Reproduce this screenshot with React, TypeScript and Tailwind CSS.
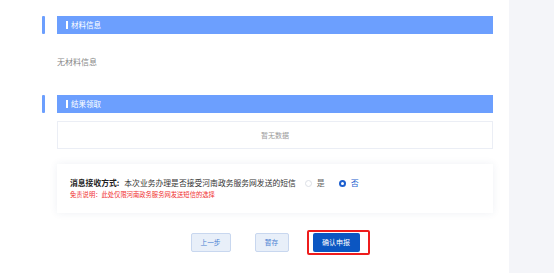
import React from 'react';

const font = { fontFamily: '"Noto Sans CJK SC", "Noto Sans", sans-serif' };

const SectionHeader = ({ title }: { title: string }) => (
  <div className="flex items-stretch pl-[42px] pr-[16px] h-[18px]">
    <div className="w-[3px] bg-[#6c9ffe] rounded-[1px]" />
    <div className="ml-[12px] flex-1 bg-[#6c9ffe] flex items-center pl-[9px]">
      <span className="w-[2px] h-[8px] bg-white" />
      <span className="ml-[3px] text-[7.5px] leading-none text-white">{title}</span>
    </div>
  </div>
);

const Radio = ({ checked, label }: { checked: boolean; label: string }) => (
  <label className="flex items-center">
    {checked ? (
      <span className="w-[7px] h-[7px] rounded-full bg-[#1c5fcf] flex items-center justify-center">
        <span className="w-[3px] h-[3px] rounded-full bg-white" />
      </span>
    ) : (
      <span className="w-[7px] h-[7px] rounded-full border border-[#dcdfe6] bg-white" />
    )}
    <span className={`ml-[5px] text-[8px] leading-none ${checked ? 'text-[#1c5fcf]' : 'text-[#666]'}`}>{label}</span>
  </label>
);

export default function App() {
  return (
    <div className="flex w-[554px] h-[273px] bg-white overflow-hidden" style={font}>
      <div className="w-[509px] pt-[16px] flex flex-col">
        <SectionHeader title="材料信息" />
        <div className="pl-[57px] mt-[22px] text-[8px] leading-[12px] text-[#888]">无材料信息</div>

        <div className="mt-[27px]">
          <SectionHeader title="结果领取" />
        </div>
        <div className="pl-[57px] pr-[16px] mt-[8px]">
          <div className="h-[28px] border border-[#ebeef5] flex items-center justify-center text-[7px] text-[#999]">
            暂无数据
          </div>
        </div>

        <div className="pl-[57px] pr-[16px] mt-[15px]">
          <div className="h-[49px] bg-white shadow-[0_0_8px_rgba(40,60,120,0.08)] pl-[13px] pt-[13px]">
            <div className="flex items-center h-[12px]">
              <span className="text-[7.8px] font-bold text-[#222]">消息接收方式:</span>
              <span className="ml-[5px] text-[7.8px] text-[#333]">本次业务办理是否接受河南政务服务网发送的短信</span>
              <div className="ml-[9px]">
                <Radio checked={false} label="是" />
              </div>
              <div className="ml-[14px]">
                <Radio checked label="否" />
              </div>
            </div>
            <div className="mt-[1px] h-[10px] flex items-center text-[6.3px] text-[#f03030]">
              免责说明：此处仅限河南政务服务网发送短信的选择
            </div>
          </div>
        </div>

        <div className="pl-[57px] pr-[16px] mt-[20px] flex justify-center items-start gap-[24px]">
          <button className="w-[40px] h-[19px] rounded-[2px] bg-[#e8eff9] border border-[#c8d7ef] text-[6.7px] leading-none text-[#4a80d2]">
            上一步
          </button>
          <button className="w-[34px] h-[19px] rounded-[2px] bg-[#e8eff9] border border-[#c8d7ef] text-[6.7px] leading-none text-[#4a80d2]">
            暂存
          </button>
          <div className="relative flex">
            <button className="w-[47px] h-[19px] rounded-[2px] bg-[#0b56c2] text-[7px] leading-none text-white">
              确认申报
            </button>
            <div className="absolute left-[-6px] top-[-3px] w-[63px] h-[25px] border-2 border-[#ee1c1c] rounded-[2px] pointer-events-none" />
          </div>
        </div>
      </div>
      <div className="flex-1 bg-[#f4f5f9]" />
    </div>
  );
}
